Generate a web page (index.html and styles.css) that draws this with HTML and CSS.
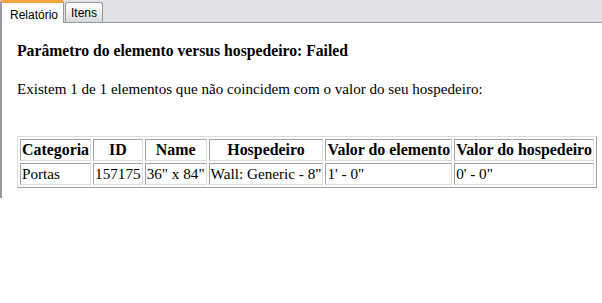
FILE: index.html
```html
<!DOCTYPE html>
<html>
<head>
  <meta charset="UTF-8">
  <title>Relatório</title>
  <link rel="stylesheet" href="styles.css">
</head>
<body>
  <div class="tabs">
    <div class="tab active">Relatório</div>
    <div class="tab">Itens</div>
  </div>

  <div class="panel">
    <h4 class="title">Parâmetro do elemento versus hospedeiro: Failed</h4>
    <p class="summary">Existem 1 de 1 elementos que não coincidem com o valor do seu hospedeiro:</p>

    <table class="report">
      <tr>
        <th>Categoria</th>
        <th>ID</th>
        <th>Name</th>
        <th>Hospedeiro</th>
        <th>Valor do elemento</th>
        <th>Valor do hospedeiro</th>
      </tr>
      <tr>
        <td>Portas</td>
        <td>157175</td>
        <td>36" x 84"</td>
        <td>Wall: Generic - 8"</td>
        <td>1' - 0"</td>
        <td>0' - 0"</td>
      </tr>
    </table>
  </div>
</body>
</html>
```

FILE: styles.css
```css
body {
  margin: 0;
  background-color: white;
  font-family: "Liberation Serif", "Times New Roman", serif;
  font-size: 16px;
  color: black;
}

.tabs {
  display: flex;
  align-items: flex-end;
  height: 22px;
  background-color: #e2e1e6;
  border-bottom: 1px solid #8d9a9b;
  font-family: "Liberation Sans", Arial, sans-serif;
  font-size: 12px;
}

.tab {
  box-sizing: border-box;
  height: 20px;
  margin-left: 1px;
  padding: 3px 5px 0 5px;
  border: 1px solid #919b9c;
  border-bottom: none;
  border-radius: 3px 3px 0 0;
  background: linear-gradient(#ffffff, #ecebe6 60%, #d8d7dc);
}

.tab.active {
  height: 23px;
  width: 64px;
  margin-left: 0;
  margin-bottom: -1px;
  padding: 5px 0 0 8px;
  border-left: 2px solid #9a9a9e;
  border-right: 1px solid #919b9c;
  border-top: 3px solid #f0a43a;
  background: #fcfcfe;
}

.panel {
  border-left: 2px solid #9a9a9e;
  padding: 1px 15px 10px 15px;
  background-color: white;
}

.title {
  margin: 18px 0 0 0;
  font-size: 15.7px;
}

.summary {
  margin: 21px 0 0 0;
  font-size: 15.1px;
}

.report {
  margin-top: 38px;
  border-spacing: 2px;
  border-top: 1px solid #dcdcdc;
  border-left: 1px solid #dcdcdc;
  border-right: 1px solid #a0a0a0;
  border-bottom: 1px solid #a0a0a0;
  font-size: 15.2px;
}

.report th,
.report td {
  padding: 1px;
  height: 18px;
  border-top: 1px solid #a0a0a0;
  border-left: 1px solid #a0a0a0;
  border-right: 1px solid #dcdcdc;
  border-bottom: 1px solid #dcdcdc;
  white-space: nowrap;
}

.report th {
  font-size: 15.9px;
}

.report td {
  text-align: left;
}
```
